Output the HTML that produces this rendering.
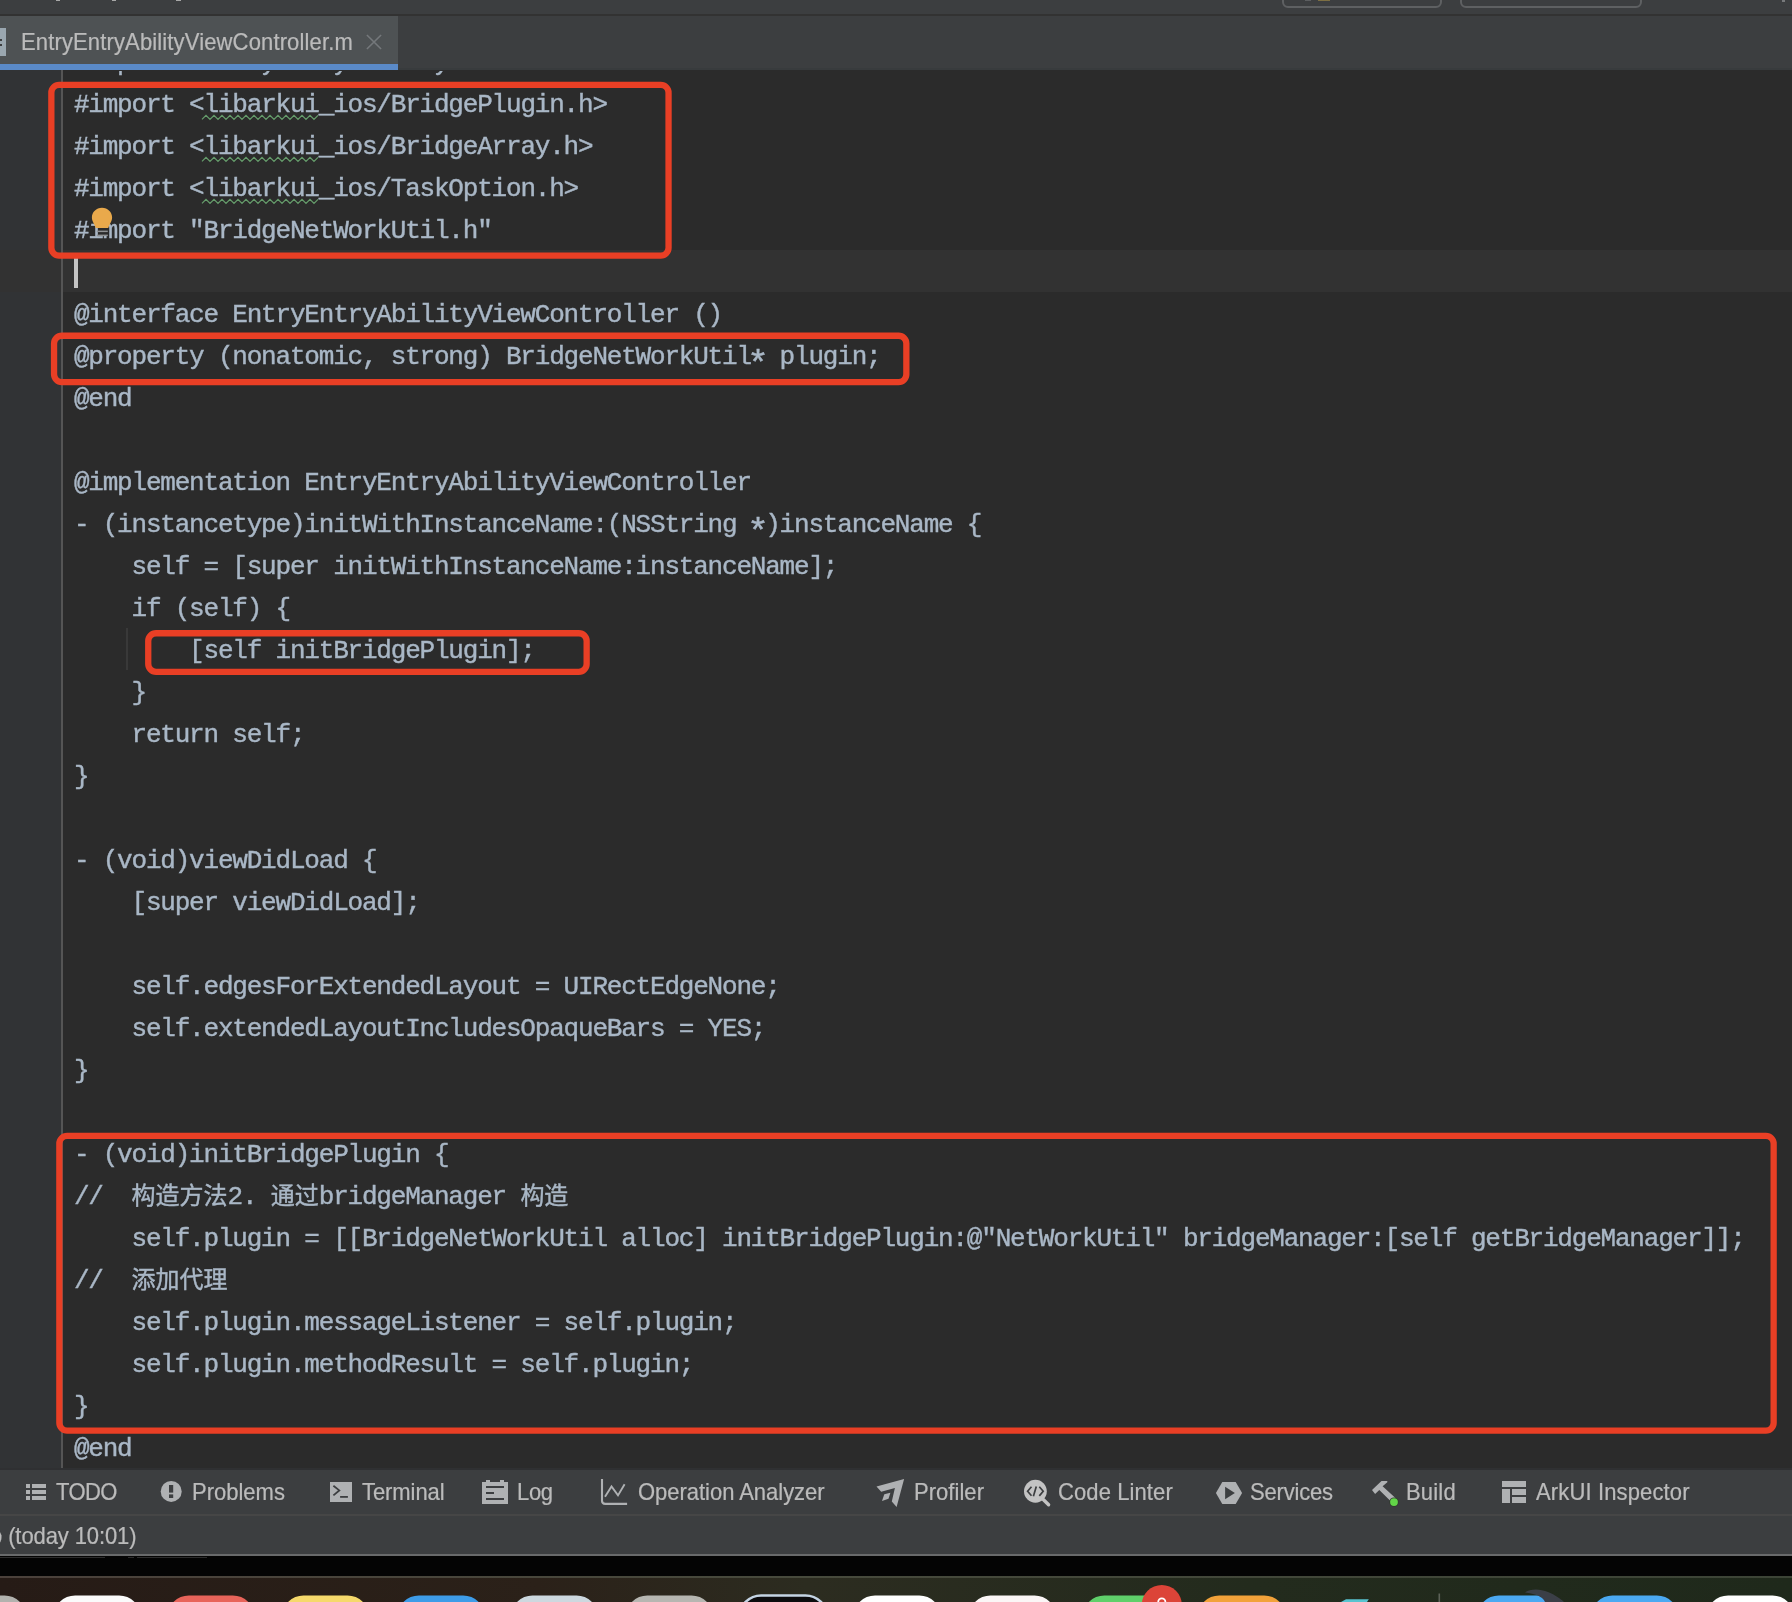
<!DOCTYPE html>
<html><head><meta charset="utf-8"><title>EntryEntryAbilityViewController.m</title>
<style>
html,body{margin:0;padding:0;}
body{width:1792px;height:1602px;position:relative;overflow:hidden;background:#2b2b2b;font-family:"Liberation Sans","Noto Sans CJK SC",sans-serif;}
.abs{position:absolute;}
#editor{position:absolute;left:0;top:70px;width:1792px;height:1399px;background:#2b2b2b;overflow:hidden;}
#gutter{position:absolute;left:0;top:0;width:61px;height:1399px;background:#313335;}
#gline{position:absolute;left:61px;top:0;width:2px;height:1399px;background:#555555;}
#curline{position:absolute;left:0;top:180px;width:1792px;height:42px;background:#323232;}
#code{position:absolute;left:0;top:-70px;will-change:transform;}
.ln{position:absolute;left:73.9px;-webkit-text-stroke:0.42px #a9b7c6;height:42px;line-height:42px;white-space:pre;font-family:"Liberation Mono","Noto Sans CJK SC",monospace;font-size:26px;letter-spacing:-1.2px;color:#a9b7c6;}
.ln u{text-decoration:none;background:none;}
.cj{font-family:"Liberation Mono","Noto Sans CJK SC",monospace;font-size:24px;letter-spacing:0;line-height:0;}
.ast{display:inline-block;transform:translate(-1px,8px) scale(1.38);transform-origin:50% 50%;}
#topbar{position:absolute;left:0;top:0;width:1792px;height:14px;background:#3c3e40;}
#topsep{position:absolute;left:0;top:14px;width:1792px;height:2px;background:#323232;}
#tabbar{position:absolute;left:0;top:16px;width:1792px;height:54px;background:#3c3e40;}
#tab{position:absolute;left:0;top:0;width:398px;height:48px;background:#4e5254;}
#tabul{position:absolute;left:0;top:48px;width:398px;height:6px;background:#5a8ac8;}
#tabtxt{position:absolute;left:21.3px;top:-2px;height:54px;line-height:54px;transform:scaleY(1.045);transform-origin:0 0;font-size:22px;color:#bbbbbb;white-space:pre;letter-spacing:0.14px;will-change:transform;-webkit-text-stroke:0.22px #bbbbbb;}
#bottombar{position:absolute;left:0;top:1469px;width:1792px;height:46px;background:#3c3e40;}
#statusbar{position:absolute;left:0;top:1516px;width:1792px;height:38px;background:#3c3e40;}
.tw{position:absolute;top:-1px;height:48px;line-height:48px;transform:scaleY(1.045);transform-origin:0 0;font-size:22px;color:#bbbbbb;white-space:pre;will-change:transform;-webkit-text-stroke:0.22px #bbbbbb;}
</style></head><body>
<div id="editor">
<div id="gutter"></div><div id="curline"></div><div id="gline"></div>
<div id="code">
<div class="ln" style="top:42px">#import "EntryEntryAbilityViewController.h"</div>
<div class="ln" style="top:84px">#import &lt;<u>libarkui</u>_ios/BridgePlugin.h&gt;</div>
<div class="ln" style="top:126px">#import &lt;<u>libarkui</u>_ios/BridgeArray.h&gt;</div>
<div class="ln" style="top:168px">#import &lt;<u>libarkui</u>_ios/TaskOption.h&gt;</div>
<div class="ln" style="top:210px">#import "BridgeNetWorkUtil.h"</div>
<div class="ln" style="top:294px">@interface EntryEntryAbilityViewController ()</div>
<div class="ln" style="top:336px">@property (nonatomic, strong) BridgeNetWorkUtil<span class="ast">*</span> plugin;</div>
<div class="ln" style="top:378px">@end</div>
<div class="ln" style="top:462px">@implementation EntryEntryAbilityViewController</div>
<div class="ln" style="top:504px">- (instancetype)initWithInstanceName:(NSString <span class="ast">*</span>)instanceName {</div>
<div class="ln" style="top:546px">    self = [super initWithInstanceName:instanceName];</div>
<div class="ln" style="top:588px">    if (self) {</div>
<div class="ln" style="top:630px">        [self initBridgePlugin];</div>
<div class="ln" style="top:672px">    }</div>
<div class="ln" style="top:714px">    return self;</div>
<div class="ln" style="top:756px">}</div>
<div class="ln" style="top:840px">- (void)viewDidLoad {</div>
<div class="ln" style="top:882px">    [super viewDidLoad];</div>
<div class="ln" style="top:966px">    self.edgesForExtendedLayout = UIRectEdgeNone;</div>
<div class="ln" style="top:1008px">    self.extendedLayoutIncludesOpaqueBars = YES;</div>
<div class="ln" style="top:1050px">}</div>
<div class="ln" style="top:1134px">- (void)initBridgePlugin {</div>
<div class="ln" style="top:1176px">//  <span class="cj">构造方法</span>2. <span class="cj">通过</span>bridgeManager <span class="cj">构造</span></div>
<div class="ln" style="top:1218px">    self.plugin = [[BridgeNetWorkUtil alloc] initBridgePlugin:@"NetWorkUtil" bridgeManager:[self getBridgeManager]];</div>
<div class="ln" style="top:1260px">//  <span class="cj">添加代理</span></div>
<div class="ln" style="top:1302px">    self.plugin.messageListener = self.plugin;</div>
<div class="ln" style="top:1344px">    self.plugin.methodResult = self.plugin;</div>
<div class="ln" style="top:1386px">}</div>
<div class="ln" style="top:1428px">@end</div>
</div>
<svg class="abs" style="left:0;top:0" width="400" height="140" viewBox="0 0 400 140"><path d="M202 49.4 L206 45.4 L210 49.4 L214 45.4 L218 49.4 L222 45.4 L226 49.4 L230 45.4 L234 49.4 L238 45.4 L242 49.4 L246 45.4 L250 49.4 L254 45.4 L258 49.4 L262 45.4 L266 49.4 L270 45.4 L274 49.4 L278 45.4 L282 49.4 L286 45.4 L290 49.4 L294 45.4 L298 49.4 L302 45.4 L306 49.4 L310 45.4 L314 49.4 L318 45.4" stroke="#659c6b" stroke-width="1.3" fill="none"/>
<path d="M202 91.4 L206 87.4 L210 91.4 L214 87.4 L218 91.4 L222 87.4 L226 91.4 L230 87.4 L234 91.4 L238 87.4 L242 91.4 L246 87.4 L250 91.4 L254 87.4 L258 91.4 L262 87.4 L266 91.4 L270 87.4 L274 91.4 L278 87.4 L282 91.4 L286 87.4 L290 91.4 L294 87.4 L298 91.4 L302 87.4 L306 91.4 L310 87.4 L314 91.4 L318 87.4" stroke="#659c6b" stroke-width="1.3" fill="none"/>
<path d="M202 133.4 L206 129.4 L210 133.4 L214 129.4 L218 133.4 L222 129.4 L226 133.4 L230 129.4 L234 133.4 L238 129.4 L242 133.4 L246 129.4 L250 133.4 L254 129.4 L258 133.4 L262 129.4 L266 133.4 L270 129.4 L274 133.4 L278 129.4 L282 133.4 L286 129.4 L290 133.4 L294 129.4 L298 133.4 L302 129.4 L306 133.4 L310 129.4 L314 133.4 L318 129.4" stroke="#659c6b" stroke-width="1.3" fill="none"/></svg>
<div class="abs" style="left:126px;top:558px;width:2px;height:42px;background:#393939;"></div>
<div class="abs" style="left:74px;top:183px;width:4px;height:35px;background:#c4c4c4;"></div>
<svg class="abs" style="left:88px;top:134px" width="28" height="36" viewBox="0 0 28 36">
<rect x="10" y="24" width="10" height="8" fill="#2b2b2b"/>
<path d="M14 3.7 C8.2 3.7 3.9 8.2 3.9 13.4 C3.9 17.6 6.6 19.6 7.7 24 L20.3 24 C21.4 19.6 24.1 17.6 24.1 13.4 C24.1 8.2 19.8 3.7 14 3.7 Z" fill="#e9a94b"/>
<rect x="8.8" y="26.6" width="11" height="1.5" fill="#909294"/>
<rect x="8.8" y="30.6" width="11" height="1.5" fill="#909294"/>
</svg>
<div class="abs" style="left:63px;top:0;width:1729px;height:1px;background:#2b2b2b;"></div>

</div>
<svg class="abs" style="left:0;top:0;pointer-events:none" width="1792" height="1602" viewBox="0 0 1792 1602">
<rect x="51.35" y="84.85" width="617.20" height="170.80" rx="7.8" ry="7.8" fill="none" stroke="#e93f25" stroke-width="6.3"/>
<rect x="54.05" y="335.75" width="852.30" height="46.40" rx="7.8" ry="7.8" fill="none" stroke="#e93f25" stroke-width="6.3"/>
<rect x="148.25" y="633.25" width="438.40" height="38.60" rx="7.8" ry="7.8" fill="none" stroke="#e93f25" stroke-width="6.3"/>
<rect x="59.35" y="1135.85" width="1714.30" height="294.80" rx="7.8" ry="7.8" fill="none" stroke="#e93f25" stroke-width="6.3"/>
</svg>

<div id="topbar"></div><div id="topsep"></div>
<div id="tabbar">
  <div id="tab"></div><div id="tabul"></div>
  <div class="abs" style="left:0;top:12px;width:6px;height:28px;background:#9aa7b0;"></div>
  <div class="abs" style="left:0;top:23px;width:2px;height:2px;background:#3c3e40;"></div>
  <div class="abs" style="left:0;top:28px;width:2px;height:2px;background:#3c3e40;"></div>
  <div id="tabtxt">EntryEntryAbilityViewController.m</div>
  <svg class="abs" style="left:364px;top:16px" width="20" height="20" viewBox="0 0 20 20"><path d="M2.9 3 L17.1 17 M17.1 3 L2.9 17" stroke="#74787b" stroke-width="1.6" fill="none"/></svg>
  <div class="abs" style="left:398px;top:52px;width:1394px;height:2px;background:#383b3d;"></div>
</div>
<div class="abs" style="left:1282px;top:-10px;width:160px;height:17.5px;border:2px solid #5e6062;border-radius:6px;box-sizing:border-box;"></div>
<div class="abs" style="left:1460px;top:-10px;width:182px;height:17.5px;border:2px solid #5e6062;border-radius:6px;box-sizing:border-box;"></div>
<div class="abs" style="left:56px;top:0;width:4px;height:1px;background:#a8a8a8;"></div>
<div class="abs" style="left:112px;top:0;width:4px;height:1px;background:#a8a8a8;"></div>
<div class="abs" style="left:176px;top:0;width:5px;height:1px;background:#a8a8a8;"></div>
<div class="abs" style="left:1318px;top:0;width:12px;height:1px;background:#7d6f43;"></div>
<div class="abs" style="left:1305px;top:0;width:6px;height:1px;background:#5c5e60;"></div>
<div class="abs" style="left:1782px;top:0;width:3px;height:2px;background:#77797b;"></div>

<div id="bottombar">
  <div class="tw" style="left:56px;letter-spacing:-0.6px">TODO</div>
  <div class="tw" style="left:192px">Problems</div>
  <div class="tw" style="left:362px;letter-spacing:-0.08px">Terminal</div>
  <div class="tw" style="left:516.5px;letter-spacing:-0.3px">Log</div>
  <div class="tw" style="left:638px;letter-spacing:-0.03px">Operation Analyzer</div>
  <div class="tw" style="left:914px;letter-spacing:0.04px">Profiler</div>
  <div class="tw" style="left:1058px;letter-spacing:0.1px">Code Linter</div>
  <div class="tw" style="left:1250px;letter-spacing:-0.19px">Services</div>
  <div class="tw" style="left:1406px;letter-spacing:0.19px">Build</div>
  <div class="tw" style="left:1536px;letter-spacing:0.14px">ArkUI Inspector</div>
  <svg class="abs" style="left:0;top:0" width="1792" height="46" viewBox="0 1469 1792 46">
    <g fill="#afb1b3">
      <!-- TODO list icon -->
      <rect x="26" y="1484" width="4" height="4"/><rect x="32" y="1484" width="14" height="4"/>
      <rect x="26" y="1490" width="4" height="4"/><rect x="32" y="1490" width="14" height="4"/>
      <rect x="26" y="1496" width="4" height="4"/><rect x="32" y="1496" width="14" height="4"/>
      <!-- Problems icon -->
      <circle cx="171.2" cy="1491.4" r="10.5"/>
      <!-- Terminal icon -->
      <rect x="330" y="1482" width="22" height="20"/>
      <!-- Log icon -->
      <rect x="482" y="1482" width="26" height="22"/>
      <rect x="486" y="1480" width="4" height="2"/><rect x="500" y="1480" width="4" height="2"/>
      <!-- Profiler icon -->
      <path d="M904.1 1479 L876.5 1486.4 L881.2 1491.8 L894.9 1487.9 L891.8 1501.6 L896.6 1506.9 Z"/>
      <path d="M884.3 1494.3 L890.4 1492.8 L888.5 1498.8 L882 1501 Z"/>
      <!-- Services icon -->
      <path d="M1215.9 1492.9 L1222.3 1482 L1235.7 1482 L1242.1 1492.9 L1235.7 1504.1 L1222.3 1504.1 Z"/>
      <!-- Build hammer -->
      <path d="M1372 1490.1 L1381.5 1480.9 L1387.3 1480.9 L1387.3 1482.3 L1382.6 1486.3 L1396 1498.6 L1392 1502.6 L1379.3 1490 L1375.1 1494 Z"/>
      <!-- ArkUI Inspector icon -->
      <rect x="1502" y="1481" width="24" height="6"/>
      <rect x="1502" y="1489" width="8" height="14"/>
      <rect x="1512" y="1489" width="14" height="6"/>
      <rect x="1512" y="1497" width="14" height="6"/>
    </g>
    <!-- Code linter icon -->
    <circle cx="1035.4" cy="1491.25" r="11.4" fill="#c3c3c3"/>
    <path d="M1042.5 1498.8 L1048.6 1504.8" stroke="#c3c3c3" stroke-width="3.4" stroke-linecap="round" fill="none"/>
    <g stroke="#3c3e40" fill="none" stroke-width="1.7">
      <path d="M1031.5 1486.8 L1027.6 1491.25 L1031.5 1495.7"/>
      <path d="M1036.3 1486.6 L1033.4 1496.2"/>
      <path d="M1039.3 1486.8 L1043.2 1491.25 L1039.3 1495.9"/>
      <!-- terminal glyphs -->
      <path d="M333.4 1485.7 L339.3 1490.4 L333.4 1495.4" stroke-width="1.8"/>
    </g>
    <g fill="#3c3e40">
      <rect x="340.1" y="1496" width="7.8" height="1.8"/>
      <!-- problems exclamation -->
      <rect x="169" y="1485" width="4.2" height="7.6"/><rect x="169" y="1494.4" width="4.2" height="3.6"/>
      <!-- log lines -->
      <rect x="486" y="1486" width="18" height="2"/><rect x="486" y="1492" width="8" height="2"/><rect x="486" y="1498" width="18" height="2"/>
      <!-- services play -->
      <path d="M1225.1 1486.8 L1234.9 1492.9 L1225.1 1499.3 Z"/>
    </g>
    <!-- Operation analyzer -->
    <g stroke="#afb1b3" fill="none" stroke-width="2.1">
      <path d="M602 1479 L602 1500.8 Q602 1503.9 605.2 1503.9 L627.1 1503.9"/>
      <path d="M605 1496.8 L611.5 1486.5 L618 1495.4 L624.6 1484.3" stroke-width="1.9"/>
    </g>
    <!-- build green dot -->
    <circle cx="1394" cy="1502.1" r="4.7" fill="#2f3a2c"/>
    <circle cx="1394" cy="1502.1" r="3.9" fill="#62d548"/>
  </svg>
  <div class="abs" style="left:0;top:45px;width:1792px;height:2px;background:#464646;"></div>
</div>
<div id="statusbar"><div class="tw" style="left:-10px;top:-1px;height:41px;line-height:41px;letter-spacing:-0.1px">o (today 10:01)</div></div>
<svg class="abs" style="left:0;top:1554px" width="1792" height="48" viewBox="0 1554 1792 48">
<defs><linearGradient id="dk" x1="0" x2="1" y1="0" y2="0"><stop offset="0" stop-color="#261b16"/><stop offset="0.3" stop-color="#2b2119"/><stop offset="0.45" stop-color="#2c2c20"/><stop offset="0.7" stop-color="#232b1d"/><stop offset="1" stop-color="#1f291b"/></linearGradient>
<linearGradient id="dl" x1="0" x2="1" y1="0" y2="0"><stop offset="0" stop-color="#4b413b"/><stop offset="0.45" stop-color="#474a3c"/><stop offset="1" stop-color="#3c4436"/></linearGradient></defs>
<rect x="0" y="1554" width="1792" height="2" fill="#696a6b"/>
<rect x="0" y="1556" width="1792" height="20" fill="#040404"/>
<rect x="0" y="1557" width="105" height="1" fill="#2c2c2c"/><rect x="128" y="1557" width="6" height="1" fill="#2c2c2c"/><rect x="137" y="1557" width="70" height="1" fill="#2c2c2c"/>
<rect x="0" y="1578" width="1792" height="24" fill="url(#dk)"/>
<rect x="0" y="1576" width="1792" height="2" fill="url(#dl)"/>
<rect x="-62.0" y="1595.4" width="88.0" height="60" rx="21.5" fill="#b2b2ae"/>
<rect x="53.6" y="1595.4" width="87.0" height="60" rx="21.5" fill="#fbfbfb"/>
<rect x="167.4" y="1595.4" width="87.0" height="60" rx="21.5" fill="#e8645a"/>
<rect x="282.0" y="1595.4" width="87.0" height="60" rx="21.5" fill="#f6d96b"/>
<rect x="397.4" y="1595.4" width="87.3" height="60" rx="21.5" fill="#3e9ce8"/>
<rect x="511.0" y="1595.4" width="87.0" height="60" rx="21.5" fill="#cdd8df"/>
<rect x="625.8" y="1595.4" width="87.2" height="60" rx="21.5" fill="#b6b6b1"/>
<rect x="739.6" y="1595.4" width="87.4" height="60" rx="21.5" fill="#0c0c0e" stroke="#c4d4e4" stroke-width="2.5"/>
<rect x="853.5" y="1595.4" width="87.3" height="60" rx="21.5" fill="#ffffff"/>
<rect x="969.0" y="1595.4" width="87.0" height="60" rx="21.5" fill="#fbf6f6"/>
<rect x="1082.8" y="1595.4" width="87.2" height="60" rx="21.5" fill="#5fd06a"/>
<rect x="1197.7" y="1595.4" width="88.0" height="60" rx="21.5" fill="#f2a23a"/>
<rect x="1477.3" y="1595.4" width="87.7" height="60" rx="21.5" fill="#4ba9f2"/>
<rect x="1591.0" y="1595.4" width="87.4" height="60" rx="21.5" fill="#4ba9f2"/>
<rect x="1706.6" y="1595.4" width="87.4" height="60" rx="21.5" fill="#ffffff"/>
<path d="M1341 1602 L1346 1599.3 L1368.8 1599.3 L1367 1602 Z" fill="#58c4d0"/>
<rect x="1438.5" y="1593.5" width="1.6" height="9" fill="#5d6258"/>
<path d="M1525 1592.5 C1530 1588.5 1540 1588.5 1548 1592 C1556 1595.5 1561 1599 1564 1602 L1545 1602 C1543 1597 1536 1594 1525 1592.5 Z" fill="#3b3f47"/>
<circle cx="1161.8" cy="1605" r="20" fill="#dc4438"/>
<path d="M1158.2 1602 A3.6 3.6 0 0 1 1165.4 1602" stroke="#ffffff" stroke-width="1.8" fill="none"/>
</svg>

<div id="edsep" class="abs" style="left:0;top:1468px;width:1792px;height:2px;background:#2f3032;"></div>

</body></html>
